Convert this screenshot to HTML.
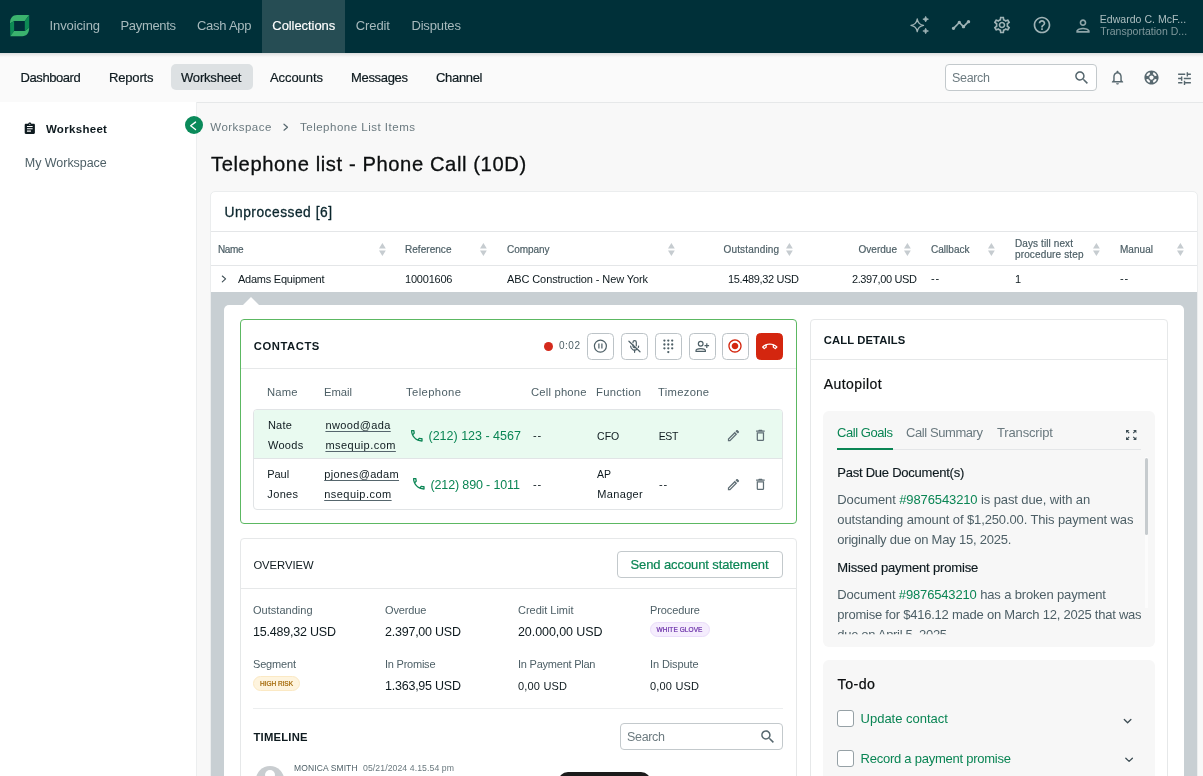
<!DOCTYPE html>
<html lang="en">
<head>
<meta charset="utf-8">
<title>Telephone list - Phone Call (10D)</title>
<style>
*{box-sizing:border-box;margin:0;padding:0}
html,body{width:1203px;height:776px;overflow:hidden;background:#f8f8f8;font-family:"Liberation Sans",sans-serif;}
.b{position:absolute}
.t{position:absolute;white-space:nowrap;}
svg{position:absolute;overflow:visible}
.u{text-decoration:underline;text-underline-offset:2px;text-decoration-thickness:1px}
.g{color:#0a8554}
.btn{position:absolute;width:26.5px;height:26.5px;top:333px;border:1px solid #bcc3c7;border-radius:4.5px;background:#fff}
</style>
</head>
<body>
<!-- top navigation -->
<div class="b" style="left:0;top:53px;width:1203px;height:49px;background:#fafafa"></div>
<div class="b" style="left:0;top:52px;width:1203px;height:6px;background:linear-gradient(#cfd2d3 0,#dcdedf 20%,#ececec 50%,#f7f7f7 80%,#fafafa 100%)"></div>
<div class="b" style="left:0;top:0;width:1203px;height:52.700px;background:#003039"></div>
<div class="b" style="left:262px;top:0;width:83px;height:52.700px;background:#264d54"></div>
<!-- logo -->
<svg style="left:10px;top:15px" width="20" height="22" viewBox="0 0 20 22">
  <path d="M0 8.500 C0 3 2.500 0 7 0 H19.200 L14.800 6.100 H4.100 Z" fill="#3bb26e"/>
  <path d="M0 8.500 L4.100 6.100 V16 L0.300 21.200 Z" fill="#0d8a55"/>
  <path d="M0.300 21.200 L4.100 16 H14.800 L19.200 12.500 C19.200 18 16.500 21.200 12.500 21.200 Z" fill="#3bb26e"/>
  <path d="M19.200 0 V12.500 L14.800 16 V6.100 Z" fill="#0d8a55"/>
</svg>
<!-- sub navigation -->
<div class="b" style="left:0;top:101.700px;width:1203px;height:1px;background:#e6e8e9"></div>
<div class="b" style="left:171px;top:64px;width:81.600px;height:26.400px;border-radius:5px;background:#dde1e3"></div>
<div class="b" style="left:945px;top:64px;width:152px;height:27px;border-radius:4px;background:#fff;border:1px solid #c3c9cc"></div>
<!-- sidebar -->
<div class="b" style="left:0;top:102px;width:197px;height:674px;background:#fff;border-right:1px solid #eceeef"></div>
<div class="b" style="left:184.5px;top:115.7px;width:18.6px;height:18.6px;border-radius:50%;background:#0a8a5a"></div>
<svg style="left:184.3px;top:115.5px" width="19" height="19" viewBox="0 0 19 19"><path d="M11.500 6.100 L6.700 9.800 L11.500 13.500" fill="none" stroke="#fff" stroke-width="1.4" stroke-linecap="round" stroke-linejoin="round"/></svg>
<!-- main card -->
<div class="b" style="left:210px;top:191px;width:987.5px;height:600px;background:#fff;border:1px solid #ebedee;border-radius:5px"></div>
<div class="b" style="left:211px;top:231px;width:986px;height:1px;background:#e4e6e8"></div>
<div class="b" style="left:211px;top:265px;width:986px;height:1px;background:#e4e6e8"></div>
<!-- expanded region -->
<div class="b" style="left:211px;top:292px;width:986px;height:484px;background:#c8cfd3"></div>
<div class="b" style="left:224px;top:305px;width:959.700px;height:480px;background:#fff;border-radius:5px"></div>
<svg style="left:242.600px;top:297.400px" width="16" height="8" viewBox="0 0 16 8"><path d="M0 8 L8 0 L16 8 Z" fill="#fff"/></svg>
<!-- contacts card -->
<div class="b" style="left:240px;top:319px;width:557px;height:204.5px;border:1px solid #5cb862;border-radius:4px;background:#fff"></div>
<div class="b" style="left:241px;top:368px;width:555px;height:1px;background:#e6e8e9"></div>
<div class="b" style="left:253px;top:409px;width:529.800px;height:100.700px;border:1px solid #e1e4e6;border-radius:4px;background:#fff;overflow:hidden">
  <div class="b" style="left:0;top:0;width:530px;height:49px;background:#e9faf0;border-bottom:1px solid #e1e4e6"></div>
</div>
<!-- call controls -->
<div class="b" style="left:544px;top:341.5px;width:9px;height:9px;border-radius:50%;background:#d42a1c"></div>
<div class="btn" style="left:587.3px"></div>
<div class="btn" style="left:621.3px"></div>
<div class="btn" style="left:655.3px"></div>
<div class="btn" style="left:689.3px"></div>
<div class="btn" style="left:722.1px"></div>
<div class="btn" style="left:756.1px;background:#d4260f;border-color:#d4260f"></div>
<!-- overview card -->
<div class="b" style="left:240px;top:538px;width:557px;height:260px;border:1px solid #e6e8e9;border-radius:4px;background:#fff"></div>
<div class="b" style="left:241px;top:587.500px;width:555px;height:1px;background:#e6e8e9"></div>
<div class="b" style="left:617px;top:551px;width:166px;height:27px;border:1px solid #c3c9cc;border-radius:4px;background:#fff"></div>
<div class="b" style="left:650px;top:622px;width:60px;height:15px;border-radius:8px;background:#f5edfd;border:1px solid #eadcfa"></div>
<div class="b" style="left:253px;top:676px;width:47px;height:15px;border-radius:8px;background:#fef4de;border:1px solid #fbe9c4"></div>
<div class="b" style="left:253px;top:708px;width:530px;height:1px;background:#eceeef"></div>
<div class="b" style="left:620px;top:723px;width:163px;height:27px;border:1px solid #c3c9cc;border-radius:4px;background:#fff"></div>
<div class="b" style="left:256px;top:765.500px;width:28px;height:28px;border-radius:50%;background:#c9cdd0"></div>
<div class="b" style="left:265px;top:770px;width:10px;height:10px;border-radius:50%;background:#fff"></div>
<div class="b" style="left:557.500px;top:771.600px;width:93.500px;height:20px;border-radius:10px;background:#1b1b1b"></div>
<!-- call details card -->
<div class="b" style="left:810px;top:319px;width:358px;height:480px;border:1px solid #e6e8e9;border-radius:4px;background:#fff"></div>
<div class="b" style="left:811px;top:359px;width:356px;height:1px;background:#e6e8e9"></div>
<div class="b" style="left:823px;top:411px;width:332px;height:236px;border-radius:6px;background:#f7f7f7"></div>
<div class="b" style="left:837px;top:449px;width:304px;height:1px;background:#e4e6e8"></div>
<div class="b" style="left:837px;top:448px;width:56px;height:2px;background:#0a8554"></div>
<div class="b" style="left:1144.5px;top:457px;width:3.5px;height:151px;background:#fcfcfc"></div>
<div class="b" style="left:1144.5px;top:458px;width:3.5px;height:77px;border-radius:2px;background:#c6cbce"></div>
<div class="b" style="left:823px;top:660px;width:332px;height:140px;border-radius:6px;background:#f7f7f7"></div>
<div class="b" style="left:837px;top:710px;width:16.5px;height:16.5px;border:1.3px solid #96a1a6;border-radius:3px;background:#fff"></div>
<div class="b" style="left:837px;top:750px;width:16.5px;height:16.5px;border:1.3px solid #96a1a6;border-radius:3px;background:#fff"></div>
<svg style="left:910.3px;top:15.2px" width="20" height="20" viewBox="0 0 24 24" fill="none" stroke="#9fb3b6" stroke-width="1.6" stroke-linejoin="round"><path d="M8.700 4.800 Q9.700 11.400 16.200 12.400 Q9.700 13.400 8.700 20 Q7.700 13.400 1.200 12.400 Q7.700 11.400 8.700 4.800 Z"/><path d="M18.800 1.600 Q19.200 4.600 22.200 5 Q19.200 5.400 18.800 8.400 Q18.400 5.400 15.400 5 Q18.400 4.600 18.800 1.600 Z" fill="#9fb3b6" stroke-width="0.800"/><path d="M18.800 15.800 Q19.200 18.800 22.200 19.200 Q19.200 19.600 18.800 22.600 Q18.400 19.600 15.400 19.200 Q18.400 18.800 18.800 15.800 Z" fill="#9fb3b6" stroke-width="0.800"/></svg>
<svg style="left:951.0px;top:14.8px" width="20" height="20" viewBox="0 0 24 24"><path d="M23 8c0 1.1-.9 2-2 2-.18 0-.35-.02-.51-.07l-3.56 3.55c.05.16.07.34.07.52 0 1.1-.9 2-2 2s-2-.9-2-2c0-.18.02-.36.07-.52l-2.55-2.55c-.16.05-.34.07-.52.07s-.36-.02-.52-.07l-4.55 4.56c.05.16.07.33.07.51 0 1.1-.9 2-2 2s-2-.9-2-2 .9-2 2-2c.18 0 .35.02.51.07l4.56-4.55C8.020 9.36 8 9.18 8 9c0-1.1.9-2 2-2s2 .9 2 2c0 .18-.02.36-.07.52l2.55 2.55c.16-.05.34-.07.52-.07s.36.02.52.07l3.550-3.560C19.020 8.350 19 8.180 19 8c0-1.1.9-2 2-2s2 .9 2 2z" fill="#9fb3b6"/></svg>
<svg style="left:991.9px;top:15.3px" width="20" height="20" viewBox="0 0 24 24"><path d="M19.43 12.98c.04-.32.07-.64.07-.98 0-.34-.03-.66-.07-.98l2.11-1.65c.19-.15.24-.42.12-.64l-2-3.46c-.09-.16-.26-.25-.44-.25-.06 0-.12.01-.17.03l-2.49 1c-.52-.4-1.08-.73-1.69-.98l-.38-2.65C14.46 2.18 14.25 2 14 2h-4c-.25 0-.46.18-.49.42l-.38 2.65c-.61.25-1.17.59-1.69.98l-2.49-1c-.06-.02-.12-.03-.18-.03-.17 0-.34.09-.43.25l-2 3.46c-.13.22-.07.49.12.64l2.11 1.65c-.04.32-.07.65-.07.98 0 .33.03.66.07.98l-2.11 1.65c-.19.15-.24.42-.12.64l2 3.46c.09.16.26.25.44.25.06 0 .12-.01.17-.03l2.49-1c.52.4 1.08.73 1.69.98l.38 2.65c.03.24.24.42.49.42h4c.25 0 .46-.18.49-.42l.38-2.65c.61-.25 1.17-.59 1.69-.98l2.49 1c.06.02.12.03.18.03.17 0 .34-.09.43-.25l2-3.46c.12-.22.07-.49-.12-.64l-2.11-1.65zm-1.98-1.71c.04.31.05.52.05.73 0 .21-.02.43-.05.73l-.14 1.13.89.7 1.08.84-.7 1.21-1.27-.51-1.04-.42-.9.68c-.43.32-.84.56-1.25.73l-1.06.43-.16 1.13-.2 1.35h-1.4l-.19-1.35-.16-1.13-1.06-.43c-.43-.18-.83-.41-1.23-.71l-.91-.7-1.06.43-1.27.51-.7-1.21 1.08-.84.89-.7-.14-1.13c-.03-.31-.05-.54-.05-.74s.02-.43.05-.73l.14-1.13-.89-.7-1.08-.84.7-1.21 1.27.51 1.04.42.9-.68c.43-.32.84-.56 1.25-.73l1.06-.43.16-1.13.2-1.35h1.39l.19 1.35.16 1.13 1.06.43c.43.18.83.41 1.23.71l.91.7 1.06-.43 1.27-.51.7 1.21-1.07.85-.89.7.14 1.13zM12 8c-2.21 0-4 1.79-4 4s1.79 4 4 4 4-1.79 4-4-1.79-4-4-4zm0 6c-1.1 0-2-.9-2-2s.9-2 2-2 2 .9 2 2-.9 2-2 2z" fill="#9fb3b6"/></svg>
<svg style="left:1032.4px;top:15.3px" width="20" height="20" viewBox="0 0 24 24"><path d="M11 18h2v-2h-2v2zm1-16C6.48 2 2 6.48 2 12s4.48 10 10 10 10-4.48 10-10S17.52 2 12 2zm0 18c-4.41 0-8-3.59-8-8s3.59-8 8-8 8 3.59 8 8-3.590 8-8 8zm0-14c-2.21 0-4 1.79-4 4h2c0-1.1.9-2 2-2s2 .9 2 2c0 2-3 1.75-3 5h2c0-2.25 3-2.5 3-5 0-2.21-1.79-4-4-4z" fill="#9fb3b6"/></svg>
<svg style="left:1072.6px;top:15.9px" width="20" height="20" viewBox="0 0 24 24"><path d="M12 6c1.1 0 2 .9 2 2s-.9 2-2 2-2-.9-2-2 .9-2 2-2m0 10c2.7 0 5.8 1.29 6 2H6c.23-.72 3.31-2 6-2m0-12C9.79 4 8 5.79 8 8s1.79 4 4 4 4-1.79 4-4-1.79-4-4-4zm0 10c-2.67 0-8 1.34-8 4v2h16v-2c0-2.66-5.33-4-8-4z" fill="#8fa5a9"/></svg>
<svg style="left:1072.8px;top:68.8px" width="17.5" height="17.5" viewBox="0 0 24 24"><path d="M15.5 14h-.79l-.28-.27C15.41 12.59 16 11.11 16 9.5 16 5.91 13.09 3 9.5 3S3 5.91 3 9.5 5.91 16 9.5 16c1.61 0 3.09-.59 4.23-1.57l.27.28v.79l5 4.99L20.49 19l-4.99-5zm-6 0C7.01 14 5 11.99 5 9.5S7.01 5 9.5 5 14 7.01 14 9.5 11.99 14 9.500 14z" fill="#56676e"/></svg>
<svg style="left:1109.0px;top:69.1px" width="17" height="17" viewBox="0 0 24 24"><path d="M12 22c1.1 0 2-.9 2-2h-4c0 1.1.9 2 2 2zm6-6v-5c0-3.07-1.63-5.64-4.5-6.32V4c0-.83-.67-1.5-1.5-1.5s-1.5.67-1.5 1.5v.68C7.64 5.36 6 7.92 6 11v5l-2 2v1h16v-1l-2-2zm-2 1H8v-6c0-2.48 1.51-4.5 4-4.5s4 2.02 4 4.500v6z" fill="#56676e"/></svg>
<svg style="left:1142.6px;top:69.4px" width="17" height="17" viewBox="0 0 24 24"><path d="M12 2C6.48 2 2 6.48 2 12s4.48 10 10 10 10-4.48 10-10S17.52 2 12 2zm7.46 7.12l-2.78 1.15c-.51-1.36-1.58-2.44-2.95-2.94l1.15-2.78c2.1.8 3.77 2.47 4.58 4.57zM12 15c-1.66 0-3-1.34-3-3s1.34-3 3-3 3 1.340 3 3-1.340 3-3 3zM9.130 4.540l1.170 2.780c-1.380.5-2.470 1.590-2.980 2.970L4.540 9.130c.81-2.110 2.480-3.780 4.590-4.590zM4.540 14.870l2.780-1.150c.51 1.380 1.590 2.460 2.970 2.960l-1.170 2.780c-2.100-.81-3.770-2.480-4.580-4.590zm10.340 4.590l-1.150-2.780c1.370-.51 2.450-1.590 2.950-2.970l2.780 1.170c-.81 2.100-2.480 3.770-4.580 4.580z" fill="#56676e"/></svg>
<svg style="left:1175.9px;top:69.6px" width="17" height="17" viewBox="0 0 24 24"><path d="M3 17v2h6v-2H3zM3 5v2h10V5H3zm10 16v-2h8v-2h-8v-2h-2v6h2zM7 9v2H3v2h4v2h2V9H7zm14 4v-2H11v2h10zm-6-4h2V7h4V5h-4V3h-2v6z" fill="#56676e"/></svg>
<svg style="left:22.6px;top:121.5px" width="13.6" height="13.6" viewBox="0 0 24 24"><path d="M19 3h-4.180C14.400 1.840 13.300 1 12 1c-1.300 0-2.400.84-2.820 2H5c-1.100 0-2 .9-2 2v14c0 1.100.9 2 2 2h14c1.100 0 2-.9 2-2V5c0-1.100-.9-2-2-2zm-7 0c.55 0 1 .45 1 1s-.45 1-1 1-1-.45-1-1 .45-1 1-1zm2 14H7v-2h7v2zm3-4H7v-2h10v2zm0-4H7V7h10v2z" fill="#0e1a1f"/></svg>
<svg style="left:758.8px;top:727.9px" width="17.5" height="17.5" viewBox="0 0 24 24"><path d="M15.5 14h-.79l-.28-.27C15.41 12.59 16 11.11 16 9.5 16 5.91 13.09 3 9.5 3S3 5.91 3 9.5 5.91 16 9.5 16c1.61 0 3.09-.59 4.23-1.57l.27.28v.79l5 4.99L20.49 19l-4.99-5zm-6 0C7.01 14 5 11.99 5 9.5S7.01 5 9.5 5 14 7.01 14 9.5 11.99 14 9.500 14z" fill="#56676e"/></svg>
<svg style="left:0;top:0" width="1203" height="776" fill="none" stroke="#4d5f66" stroke-width="1.2" stroke-linecap="round" stroke-linejoin="round"><circle cx="600.4" cy="346.1" r="6"/><path d="M598.900 343.600 V348.600 M601.900 343.600 V348.600" stroke-linecap="butt"/><path d="M633 342.700 V342.300 a1.650 1.650 0 0 1 3.300 0 V345.800"/><path d="M633 344.800 V346 a1.650 1.650 0 0 0 2.500 1.400"/><path d="M630.600 346.100 a4 4 0 0 0 6.500 3.100"/><path d="M638.600 346.100 a4 4 0 0 1 -.3 1.400"/><path d="M634.600 350.200 V352.300"/><path d="M628.900 341.200 L640 351.800"/><circle cx="700.700" cy="343.700" r="2.350"/><path d="M696 351.400 v-.7 c0 -1.300 2.500 -2.100 4.700 -2.100 s4.700 .8 4.700 2.100 v.7 z"/><path d="M706.800 343.300 V347.900 M704.500 345.600 H709.100" stroke-linecap="butt"/></svg>
<svg style="left:0;top:0" width="1203" height="776" fill="#4d5f66"><circle cx="664.4" cy="340.6" r="1.150"/><circle cx="668.3" cy="340.6" r="1.150"/><circle cx="672.2" cy="340.6" r="1.150"/><circle cx="664.4" cy="344.5" r="1.150"/><circle cx="668.3" cy="344.5" r="1.150"/><circle cx="672.2" cy="344.5" r="1.150"/><circle cx="664.4" cy="348.3" r="1.150"/><circle cx="668.3" cy="348.3" r="1.150"/><circle cx="672.2" cy="348.3" r="1.150"/><circle cx="668.300" cy="352.100" r="1.150"/></svg>
<svg style="left:727.3px;top:338.2px" width="16" height="16" viewBox="0 0 24 24"><path d="M12 7c-2.76 0-5 2.24-5 5s2.240 5 5 5 5-2.240 5-5-2.240-5-5-5zm0-5C6.480 2 2 6.480 2 12s4.480 10 10 10 10-4.480 10-10S17.520 2 12 2zm0 18c-4.420 0-8-3.580-8-8s3.580-8 8-8 8 3.580 8 8-3.580 8-8 8z" fill="#d4260f"/></svg>
<svg style="left:761.5px;top:338.6px" width="15.5" height="15.5" viewBox="0 0 24 24"><path d="M18.59 10.52c1.05.51 2.04 1.15 2.96 1.91l-1.07 1.07c-.58-.47-1.21-.89-1.88-1.27v-1.71m-13.2 0v1.7c-.65.37-1.28.79-1.87 1.27l-1.07-1.07c.91-.75 1.9-1.38 2.940-1.900M12 7C7.460 7 3.340 8.780.29 11.670c-.18.18-.29.43-.29.71s.11.53.29.7l2.480 2.480c.18.18.43.29.71.29.27 0 .52-.1.7-.28.79-.73 1.680-1.360 2.660-1.850.33-.16.56-.51.56-.9v-3.100C8.850 9.250 10.400 9 12 9s3.150.25 4.590.73v3.100c0 .4.230.74.560.9.980.49 1.880 1.110 2.670 1.850.18.17.43.28.7.28.28 0 .53-.11.71-.29l2.480-2.480c.18-.18.29-.43.29-.71s-.11-.53-.29-.71C20.660 8.780 16.540 7 12 7z" fill="#ffffff"/></svg>
<svg style="left:409.0px;top:427.6px" width="15.6" height="15.6" viewBox="0 0 24 24"><path d="M6.54 5c.06.89.21 1.760.45 2.590l-1.200 1.200c-.41-1.200-.67-2.470-.76-3.790h1.510m9.860 12.020c.85.24 1.720.39 2.600.45v1.490c-1.320-.09-2.590-.35-3.800-.75l1.200-1.190M7.500 3H4c-.55 0-1 .45-1 1 0 9.390 7.610 17 17 17 .55 0 1-.45 1-1v-3.490c0-.55-.45-1-1-1-1.240 0-2.450-.2-3.570-.57-.1-.04-.21-.05-.31-.05-.26 0-.51.1-.71.290l-2.200 2.200c-2.830-1.450-5.150-3.760-6.590-6.590l2.200-2.200c.28-.28.36-.67.250-1.020C8.700 6.450 8.500 5.250 8.500 4c0-.55-.45-1-1-1z" fill="#0a8554"/></svg>
<svg style="left:410.9px;top:476.4px" width="15.6" height="15.6" viewBox="0 0 24 24"><path d="M6.54 5c.06.89.21 1.760.45 2.590l-1.200 1.200c-.41-1.200-.67-2.470-.76-3.790h1.510m9.860 12.020c.85.24 1.720.39 2.600.45v1.490c-1.320-.09-2.590-.35-3.800-.75l1.200-1.190M7.500 3H4c-.55 0-1 .45-1 1 0 9.390 7.610 17 17 17 .55 0 1-.45 1-1v-3.490c0-.55-.45-1-1-1-1.240 0-2.450-.2-3.570-.57-.1-.04-.21-.05-.31-.05-.26 0-.51.1-.71.290l-2.200 2.200c-2.830-1.450-5.150-3.760-6.590-6.590l2.200-2.200c.28-.28.36-.67.250-1.020C8.700 6.450 8.500 5.250 8.500 4c0-.55-.45-1-1-1z" fill="#0a8554"/></svg>
<svg style="left:726.1px;top:427.8px" width="15" height="15" viewBox="0 0 24 24"><path d="M14.06 9.02l.92.92L5.92 19H5v-.92l9.060-9.060M17.660 3c-.25 0-.51.1-.7.29l-1.830 1.830 3.750 3.750 1.830-1.830c.39-.39.39-1.020 0-1.410l-2.340-2.340c-.2-.2-.45-.29-.71-.29zm-3.600 3.190L3 17.250V21h3.750L17.810 9.940l-3.750-3.750z" fill="#5f6e75"/></svg>
<svg style="left:753.1px;top:428.0px" width="14.8" height="14.8" viewBox="0 0 24 24"><path d="M16 9v10H8V9h8m-1.500-6h-5l-1 1H5v2h14V4h-3.500l-1-1zM18 7H6v12c0 1.100.9 2 2 2h8c1.100 0 2-.9 2-2V7z" fill="#5f6e75"/></svg>
<svg style="left:726.1px;top:476.7px" width="15" height="15" viewBox="0 0 24 24"><path d="M14.06 9.02l.92.92L5.92 19H5v-.92l9.060-9.060M17.660 3c-.25 0-.51.1-.7.29l-1.830 1.830 3.750 3.750 1.830-1.830c.39-.39.39-1.020 0-1.410l-2.340-2.340c-.2-.2-.45-.29-.71-.29zm-3.600 3.190L3 17.250V21h3.750L17.810 9.940l-3.750-3.750z" fill="#5f6e75"/></svg>
<svg style="left:753.1px;top:476.9px" width="14.8" height="14.8" viewBox="0 0 24 24"><path d="M16 9v10H8V9h8m-1.500-6h-5l-1 1H5v2h14V4h-3.500l-1-1zM18 7H6v12c0 1.100.9 2 2 2h8c1.100 0 2-.9 2-2V7z" fill="#5f6e75"/></svg>
<svg style="left:0;top:0" width="1203" height="776"><path d="M284 124.2 L287.5 127.2 L284 130.2" fill="none" stroke="#56676e" stroke-width="1.2" stroke-linecap="round" stroke-linejoin="round"/></svg>
<svg style="left:0;top:0" width="1203" height="776"><path d="M222.3 276 L225.6 278.9 L222.3 281.8" fill="none" stroke="#3d4d54" stroke-width="1.1" stroke-linecap="round" stroke-linejoin="round"/></svg>
<svg style="left:0;top:0" width="1203" height="776"><path d="M1124.3 719.5 L1127.6 722.7 L1130.9 719.5" fill="none" stroke="#3d4d54" stroke-width="1.3" stroke-linecap="round" stroke-linejoin="round"/></svg>
<svg style="left:0;top:0" width="1203" height="776"><path d="M1125.8 758.2 L1129.1 761.4 L1132.4 758.2" fill="none" stroke="#3d4d54" stroke-width="1.3" stroke-linecap="round" stroke-linejoin="round"/></svg>
<svg style="left:378.9px;top:243.3px" width="6.800" height="13" viewBox="0 0 6.800 13"><path d="M3.400 0 L6.800 5.500 H0 Z M0 7.500 H6.800 L3.400 13 Z" fill="#c6ccd0"/></svg>
<svg style="left:479.9px;top:243.3px" width="6.800" height="13" viewBox="0 0 6.800 13"><path d="M3.400 0 L6.800 5.500 H0 Z M0 7.500 H6.800 L3.400 13 Z" fill="#c6ccd0"/></svg>
<svg style="left:667.9px;top:243.3px" width="6.800" height="13" viewBox="0 0 6.800 13"><path d="M3.400 0 L6.800 5.500 H0 Z M0 7.500 H6.800 L3.400 13 Z" fill="#c6ccd0"/></svg>
<svg style="left:785.9px;top:243.3px" width="6.800" height="13" viewBox="0 0 6.800 13"><path d="M3.400 0 L6.800 5.500 H0 Z M0 7.500 H6.800 L3.400 13 Z" fill="#c6ccd0"/></svg>
<svg style="left:903.9px;top:243.3px" width="6.800" height="13" viewBox="0 0 6.800 13"><path d="M3.400 0 L6.800 5.500 H0 Z M0 7.500 H6.800 L3.400 13 Z" fill="#c6ccd0"/></svg>
<svg style="left:987.9px;top:243.3px" width="6.800" height="13" viewBox="0 0 6.800 13"><path d="M3.400 0 L6.800 5.500 H0 Z M0 7.500 H6.800 L3.400 13 Z" fill="#c6ccd0"/></svg>
<svg style="left:1092.9px;top:243.3px" width="6.800" height="13" viewBox="0 0 6.800 13"><path d="M3.400 0 L6.800 5.500 H0 Z M0 7.500 H6.800 L3.400 13 Z" fill="#c6ccd0"/></svg>
<svg style="left:1176.9px;top:243.3px" width="6.800" height="13" viewBox="0 0 6.800 13"><path d="M3.400 0 L6.800 5.500 H0 Z M0 7.500 H6.800 L3.400 13 Z" fill="#c6ccd0"/></svg>
<svg style="left:1125.800px;top:430px" width="10.400" height="10" viewBox="0 0 10.400 10" fill="#3d4d54"><path d="M0 0 H3.300 L2.100 1.200 L3.600 2.700 L2.700 3.600 L1.200 2.100 L0 3.300 Z"/><path d="M10.400 0 V3.300 L9.200 2.100 L7.700 3.600 L6.800 2.700 L8.300 1.200 L7.100 0 Z"/><path d="M0 10 V6.700 L1.200 7.900 L2.700 6.400 L3.600 7.300 L2.100 8.800 L3.300 10 Z"/><path d="M10.400 10 H7.100 L8.300 8.800 L6.800 7.300 L7.700 6.400 L9.200 7.900 L10.400 6.700 Z"/></svg>
<div class="b" style="left:0;top:0;width:1203px;height:776px;will-change:transform">
<span class="t" style="top:18.0px;font-size:13px;line-height:15px;color:#a7babd;letter-spacing:-0.10px;left:49.5px;">Invoicing</span>
<span class="t" style="top:18.0px;font-size:13px;line-height:15px;color:#a7babd;letter-spacing:-0.33px;left:120.5px;">Payments</span>
<span class="t" style="top:18.0px;font-size:13px;line-height:15px;color:#a7babd;letter-spacing:-0.27px;left:197.0px;">Cash App</span>
<span class="t" style="top:18.0px;font-size:13px;line-height:15px;color:#ffffff;letter-spacing:-0.06px;left:272.3px;-webkit-text-stroke:0.15px #fff;">Collections</span>
<span class="t" style="top:18.0px;font-size:13px;line-height:15px;color:#a7babd;letter-spacing:-0.10px;left:355.8px;">Credit</span>
<span class="t" style="top:18.0px;font-size:13px;line-height:15px;color:#a7babd;letter-spacing:-0.15px;left:411.4px;">Disputes</span>
<span class="t" style="top:13.0px;font-size:10.5px;line-height:12px;color:#adbfc1;letter-spacing:0.03px;left:1099.8px;">Edwardo C. McF...</span>
<span class="t" style="top:25.0px;font-size:10.5px;line-height:12px;color:#7f989c;letter-spacing:0.02px;left:1100.2px;">Transportation D...</span>
<span class="t" style="top:70.0px;font-size:13px;line-height:15px;color:#0e1a1f;letter-spacing:-0.43px;left:20.6px;-webkit-text-stroke:0.2px;">Dashboard</span>
<span class="t" style="top:70.0px;font-size:13px;line-height:15px;color:#0e1a1f;letter-spacing:-0.17px;left:109.0px;-webkit-text-stroke:0.2px;">Reports</span>
<span class="t" style="top:70.0px;font-size:13px;line-height:15px;color:#0e1a1f;letter-spacing:-0.18px;left:181.0px;-webkit-text-stroke:0.2px;">Worksheet</span>
<span class="t" style="top:70.0px;font-size:13px;line-height:15px;color:#0e1a1f;letter-spacing:-0.07px;left:270.0px;-webkit-text-stroke:0.2px;">Accounts</span>
<span class="t" style="top:70.0px;font-size:13px;line-height:15px;color:#0e1a1f;letter-spacing:-0.32px;left:351.0px;-webkit-text-stroke:0.2px;">Messages</span>
<span class="t" style="top:70.0px;font-size:13px;line-height:15px;color:#0e1a1f;letter-spacing:-0.32px;left:436.0px;-webkit-text-stroke:0.2px;">Channel</span>
<span class="t" style="top:71.0px;font-size:12.5px;line-height:14px;color:#6d7b80;letter-spacing:-0.32px;left:952.0px;">Search</span>
<span class="t" style="top:123.0px;font-size:11.5px;line-height:12px;color:#0e1a1f;font-weight:700;letter-spacing:0.31px;left:45.9px;">Worksheet</span>
<span class="t" style="top:156.0px;font-size:12.5px;line-height:14px;color:#4d5f66;letter-spacing:-0.04px;left:24.8px;">My Workspace</span>
<span class="t" style="top:121.0px;font-size:11.5px;line-height:12px;color:#6a797f;letter-spacing:0.46px;left:210.3px;">Workspace</span>
<span class="t" style="top:121.0px;font-size:11.5px;line-height:12px;color:#6a797f;letter-spacing:0.50px;left:300.0px;">Telephone List Items</span>
<span class="t" style="top:153.0px;font-size:20.2px;line-height:22px;color:#0c0f10;letter-spacing:0.59px;left:211.0px;-webkit-text-stroke:0.3px;">Telephone list - Phone Call (10D)</span>
<span class="t" style="top:205.0px;font-size:13.8px;line-height:15px;color:#0b262d;letter-spacing:0.50px;left:224.5px;-webkit-text-stroke:0.3px;">Unprocessed [6]</span>
<span class="t" style="top:244.0px;font-size:10px;line-height:11px;color:#4d5f66;letter-spacing:-0.40px;left:218.0px;-webkit-text-stroke:0.2px;">Name</span>
<span class="t" style="top:244.0px;font-size:10px;line-height:11px;color:#4d5f66;letter-spacing:0.04px;left:405.0px;-webkit-text-stroke:0.2px;">Reference</span>
<span class="t" style="top:244.0px;font-size:10px;line-height:11px;color:#4d5f66;letter-spacing:-0.05px;left:507.0px;-webkit-text-stroke:0.2px;">Company</span>
<span class="t" style="top:244.0px;font-size:10px;line-height:11px;color:#4d5f66;letter-spacing:0.16px;right:423.8px;-webkit-text-stroke:0.2px;">Outstanding</span>
<span class="t" style="top:244.0px;font-size:10px;line-height:11px;color:#4d5f66;letter-spacing:0.02px;right:306.0px;-webkit-text-stroke:0.2px;">Overdue</span>
<span class="t" style="top:244.0px;font-size:10px;line-height:11px;color:#4d5f66;letter-spacing:0.02px;left:931.0px;-webkit-text-stroke:0.2px;">Callback</span>
<span class="t" style="top:238.0px;font-size:10px;line-height:11px;color:#4d5f66;letter-spacing:0.10px;left:1015.0px;-webkit-text-stroke:0.2px;">Days till next</span>
<span class="t" style="top:249.0px;font-size:10px;line-height:11px;color:#4d5f66;letter-spacing:0.14px;left:1015.0px;-webkit-text-stroke:0.2px;">procedure step</span>
<span class="t" style="top:244.0px;font-size:10px;line-height:11px;color:#4d5f66;letter-spacing:0.04px;left:1120.0px;-webkit-text-stroke:0.2px;">Manual</span>
<span class="t" style="top:273.0px;font-size:11px;line-height:12px;color:#0e1a1f;letter-spacing:-0.24px;left:238.0px;">Adams Equipment</span>
<span class="t" style="top:273.0px;font-size:11px;line-height:12px;color:#0e1a1f;letter-spacing:-0.21px;left:405.0px;">10001606</span>
<span class="t" style="top:273.0px;font-size:11px;line-height:12px;color:#0e1a1f;letter-spacing:-0.10px;left:507.0px;">ABC Construction - New York</span>
<span class="t" style="top:273.0px;font-size:11px;line-height:12px;color:#0e1a1f;letter-spacing:-0.35px;right:404.4px;">15.489,32 USD</span>
<span class="t" style="top:273.0px;font-size:11px;line-height:12px;color:#0e1a1f;letter-spacing:-0.37px;right:286.4px;">2.397,00 USD</span>
<span class="t" style="top:272.0px;font-size:11px;line-height:12px;color:#0e1a1f;letter-spacing:0.87px;left:931.0px;">--</span>
<span class="t" style="top:273.0px;font-size:11px;line-height:12px;color:#0e1a1f;left:1015.0px;">1</span>
<span class="t" style="top:272.0px;font-size:11px;line-height:12px;color:#0e1a1f;letter-spacing:0.87px;left:1120.0px;">--</span>
<span class="t" style="top:340.0px;font-size:11.25px;line-height:12px;color:#0e1a1f;font-weight:700;letter-spacing:0.55px;left:253.8px;">CONTACTS</span>
<span class="t" style="top:340.0px;font-size:10px;line-height:11px;color:#4d5f66;letter-spacing:0.51px;left:559.0px;">0:02</span>
<span class="t" style="top:386.0px;font-size:11.25px;line-height:12px;color:#4d5f66;letter-spacing:0.16px;left:267.0px;">Name</span>
<span class="t" style="top:386.0px;font-size:11.25px;line-height:12px;color:#4d5f66;letter-spacing:-0.04px;left:324.0px;">Email</span>
<span class="t" style="top:386.0px;font-size:11.25px;line-height:12px;color:#4d5f66;letter-spacing:0.38px;left:406.0px;">Telephone</span>
<span class="t" style="top:386.0px;font-size:11.25px;line-height:12px;color:#4d5f66;letter-spacing:0.19px;left:531.0px;">Cell phone</span>
<span class="t" style="top:386.0px;font-size:11.25px;line-height:12px;color:#4d5f66;letter-spacing:0.26px;left:596.0px;">Function</span>
<span class="t" style="top:386.0px;font-size:11.25px;line-height:12px;color:#4d5f66;letter-spacing:0.29px;left:658.0px;">Timezone</span>
<span class="t" style="top:419.0px;font-size:11px;line-height:12px;color:#0e1a1f;letter-spacing:0.25px;left:267.9px;">Nate</span>
<span class="t" style="top:439.0px;font-size:11px;line-height:12px;color:#0e1a1f;letter-spacing:0.34px;left:267.9px;">Woods</span>
<span class="t" style="top:419.0px;font-size:11px;line-height:12px;color:#0e1a1f;letter-spacing:0.38px;left:325.4px;text-decoration:underline;text-underline-offset:1.5px;text-decoration-color:#56666d;">nwood@ada</span>
<span class="t" style="top:439.0px;font-size:11px;line-height:12px;color:#0e1a1f;letter-spacing:0.46px;left:325.4px;text-decoration:underline;text-underline-offset:1.5px;text-decoration-color:#56666d;">msequip.com</span>
<span class="t" style="top:429.0px;font-size:12.5px;line-height:14px;color:#0a8554;left:428.5px;">(212) 123 - 4567</span>
<span class="t" style="top:429.0px;font-size:11px;line-height:12px;color:#0e1a1f;letter-spacing:0.87px;left:533.0px;">--</span>
<span class="t" style="top:430.0px;font-size:10.5px;line-height:12px;color:#0e1a1f;letter-spacing:0.06px;left:597.0px;">CFO</span>
<span class="t" style="top:430.0px;font-size:10.5px;line-height:12px;color:#0e1a1f;letter-spacing:-0.46px;left:658.8px;">EST</span>
<span class="t" style="top:468.0px;font-size:11px;line-height:12px;color:#0e1a1f;letter-spacing:-0.08px;left:267.3px;">Paul</span>
<span class="t" style="top:488.0px;font-size:11px;line-height:12px;color:#0e1a1f;letter-spacing:0.36px;left:267.3px;">Jones</span>
<span class="t" style="top:468.0px;font-size:11px;line-height:12px;color:#0e1a1f;letter-spacing:0.34px;left:324.2px;text-decoration:underline;text-underline-offset:1.5px;text-decoration-color:#56666d;">pjones@adam</span>
<span class="t" style="top:488.0px;font-size:11px;line-height:12px;color:#0e1a1f;letter-spacing:0.46px;left:324.2px;text-decoration:underline;text-underline-offset:1.5px;text-decoration-color:#56666d;">nsequip.com</span>
<span class="t" style="top:478.0px;font-size:12.5px;line-height:14px;color:#0a8554;letter-spacing:-0.14px;left:430.5px;">(212) 890 - 1011</span>
<span class="t" style="top:478.0px;font-size:11px;line-height:12px;color:#0e1a1f;letter-spacing:0.87px;left:533.0px;">--</span>
<span class="t" style="top:468.0px;font-size:10.5px;line-height:12px;color:#0e1a1f;letter-spacing:0.08px;left:597.0px;">AP</span>
<span class="t" style="top:488.0px;font-size:11px;line-height:12px;color:#0e1a1f;letter-spacing:0.33px;left:597.3px;">Manager</span>
<span class="t" style="top:478.0px;font-size:11px;line-height:12px;color:#0e1a1f;letter-spacing:0.87px;left:659.0px;">--</span>
<span class="t" style="top:559.0px;font-size:11.25px;line-height:12px;color:#0e1a1f;letter-spacing:-0.02px;left:253.4px;">OVERVIEW</span>
<span class="t" style="top:557.0px;font-size:13px;line-height:15px;color:#0a8554;letter-spacing:-0.10px;left:630.5px;-webkit-text-stroke:0.2px;">Send account statement</span>
<span class="t" style="top:604.0px;font-size:11px;line-height:12px;color:#4d5f66;letter-spacing:0.02px;left:253.0px;">Outstanding</span>
<span class="t" style="top:604.0px;font-size:11px;line-height:12px;color:#4d5f66;letter-spacing:-0.12px;left:385.0px;">Overdue</span>
<span class="t" style="top:604.0px;font-size:11px;line-height:12px;color:#4d5f66;letter-spacing:-0.01px;left:518.0px;">Credit Limit</span>
<span class="t" style="top:604.0px;font-size:11px;line-height:12px;color:#4d5f66;letter-spacing:-0.10px;left:650.0px;">Procedure</span>
<span class="t" style="top:625.0px;font-size:12.5px;line-height:14px;color:#0e1a1f;letter-spacing:-0.21px;left:253.0px;">15.489,32 USD</span>
<span class="t" style="top:625.0px;font-size:12.5px;line-height:14px;color:#0e1a1f;letter-spacing:-0.23px;left:385.0px;">2.397,00 USD</span>
<span class="t" style="top:625.0px;font-size:12.5px;line-height:14px;color:#0e1a1f;letter-spacing:-0.08px;left:518.0px;">20.000,00 USD</span>
<span class="t" style="top:626.0px;font-size:6.5px;line-height:7px;color:#6a2fa8;letter-spacing:0.08px;left:656.5px;-webkit-text-stroke:0.2px;">WHITE GLOVE</span>
<span class="t" style="top:658.0px;font-size:11px;line-height:12px;color:#4d5f66;letter-spacing:-0.17px;left:253.0px;">Segment</span>
<span class="t" style="top:658.0px;font-size:11px;line-height:12px;color:#4d5f66;letter-spacing:-0.23px;left:385.0px;">In Promise</span>
<span class="t" style="top:658.0px;font-size:11px;line-height:12px;color:#4d5f66;letter-spacing:-0.23px;left:518.0px;">In Payment Plan</span>
<span class="t" style="top:658.0px;font-size:11px;line-height:12px;color:#4d5f66;letter-spacing:-0.11px;left:650.0px;">In Dispute</span>
<span class="t" style="top:680.0px;font-size:6.5px;line-height:7px;color:#a06500;letter-spacing:-0.03px;left:260.0px;-webkit-text-stroke:0.2px;">HIGH RISK</span>
<span class="t" style="top:679.0px;font-size:12.5px;line-height:14px;color:#0e1a1f;letter-spacing:-0.23px;left:385.0px;">1.363,95 USD</span>
<span class="t" style="top:680.0px;font-size:11px;line-height:12px;color:#0e1a1f;letter-spacing:0.19px;left:518.0px;">0,00 USD</span>
<span class="t" style="top:680.0px;font-size:11px;line-height:12px;color:#0e1a1f;letter-spacing:0.19px;left:650.0px;">0,00 USD</span>
<span class="t" style="top:731.0px;font-size:11.25px;line-height:12px;color:#0e1a1f;font-weight:700;letter-spacing:0.21px;left:253.5px;">TIMELINE</span>
<span class="t" style="top:730.0px;font-size:12.5px;line-height:14px;color:#6d7b80;letter-spacing:-0.32px;left:627.0px;">Search</span>
<span class="t" style="top:763.0px;font-size:8.5px;line-height:10px;color:#4d5f66;letter-spacing:0.11px;left:294.0px;">MONICA SMITH</span>
<span class="t" style="top:763.0px;font-size:8.7px;line-height:10px;color:#6a797f;letter-spacing:0.08px;left:363.0px;">05/21/2024 4.15.54 pm</span>
<span class="t" style="top:334.0px;font-size:11.25px;line-height:12px;color:#0e1a1f;font-weight:700;letter-spacing:0.12px;left:823.7px;">CALL DETAILS</span>
<span class="t" style="top:376.0px;font-size:14px;line-height:16px;color:#0c0f10;letter-spacing:0.44px;left:823.7px;-webkit-text-stroke:0.2px;">Autopilot</span>
<span class="t" style="top:425.0px;font-size:13px;line-height:15px;color:#0a8554;letter-spacing:-0.44px;left:837.0px;">Call Goals</span>
<span class="t" style="top:425.0px;font-size:13px;line-height:15px;color:#6a797f;letter-spacing:-0.42px;left:906.0px;">Call Summary</span>
<span class="t" style="top:425.0px;font-size:13px;line-height:15px;color:#6a797f;letter-spacing:-0.15px;left:997.0px;">Transcript</span>
<span class="t" style="top:465.0px;font-size:13px;line-height:15px;color:#0e1a1f;letter-spacing:-0.24px;left:837.3px;-webkit-text-stroke:0.15px;">Past Due Document(s)</span>
<span class="t" style="top:492.0px;font-size:13px;line-height:15px;color:#4d5f66;letter-spacing:-0.11px;left:837.3px;">Document <span class="g">#9876543210</span> is past due, with an</span>
<span class="t" style="top:512.0px;font-size:13px;line-height:15px;color:#4d5f66;letter-spacing:-0.12px;left:837.3px;">outstanding amount of $1,250.00. This payment was</span>
<span class="t" style="top:532.0px;font-size:13px;line-height:15px;color:#4d5f66;letter-spacing:-0.22px;left:837.3px;">originally due on May 15, 2025.</span>
<span class="t" style="top:560.0px;font-size:13px;line-height:15px;color:#0e1a1f;letter-spacing:-0.17px;left:837.3px;-webkit-text-stroke:0.15px;">Missed payment promise</span>
<span class="t" style="top:587.0px;font-size:13px;line-height:15px;color:#4d5f66;letter-spacing:-0.15px;left:837.3px;">Document <span class="g">#9876543210</span> has a broken payment</span>
<span class="t" style="top:607.0px;font-size:13px;line-height:15px;color:#4d5f66;letter-spacing:-0.23px;left:837.3px;">promise for $416.12 made on March 12, 2025 that was</span>
<span class="t" style="top:627.0px;font-size:13px;line-height:15px;color:#4d5f66;letter-spacing:-0.31px;left:837.3px;clip-path:inset(0 0 7.800px 0);">due on April 5, 2025.</span>
<span class="t" style="top:676.0px;font-size:14.2px;line-height:16px;color:#0c0f10;letter-spacing:0.47px;left:837.6px;-webkit-text-stroke:0.25px;">To-do</span>
<span class="t" style="top:711.0px;font-size:13px;line-height:15px;color:#0a8554;letter-spacing:-0.02px;left:860.6px;">Update contact</span>
<span class="t" style="top:751.0px;font-size:13px;line-height:15px;color:#0a8554;letter-spacing:-0.25px;left:860.6px;">Record a payment promise</span>
</div>
</body>
</html>
